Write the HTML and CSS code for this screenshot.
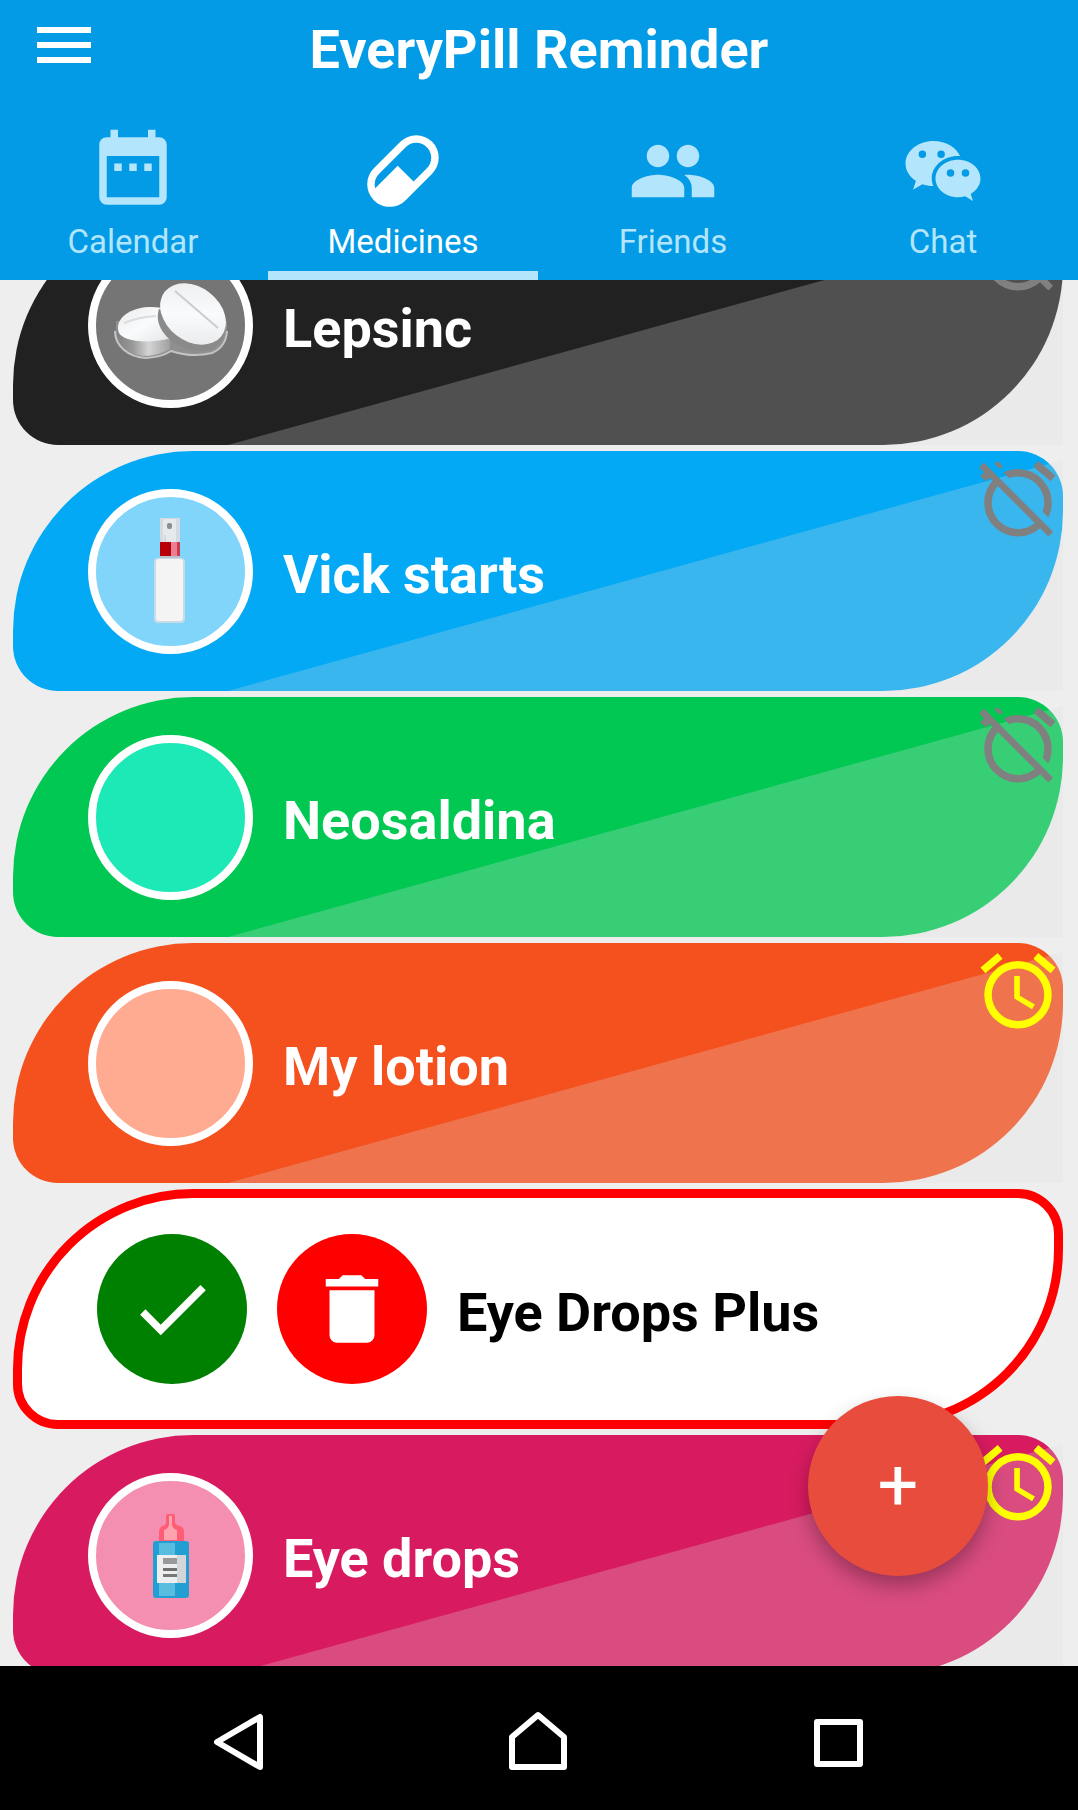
FILE: index.html
```html
<!DOCTYPE html>
<html lang="en">
<head>
<meta charset="utf-8">
<meta name="viewport" content="width=device-width, initial-scale=1">
<title>EveryPill Reminder</title>
<link rel="stylesheet" href="styles.css">
</head>
<body>
<svg class="sprite" aria-hidden="true">
  <symbol id="alarm" viewBox="0 0 24 24"><path d="M12,20A7,7 0 0,1 5,13A7,7 0 0,1 12,6A7,7 0 0,1 19,13A7,7 0 0,1 12,20M12,4A9,9 0 0,0 3,13A9,9 0 0,0 12,22A9,9 0 0,0 21,13A9,9 0 0,0 12,4M12.5,8H11V14L15.75,16.85L16.5,15.62L12.5,13.25V8M7.88,3.39L6.6,1.86L2,5.71L3.29,7.24L7.88,3.39M22,5.72L17.4,1.86L16.11,3.39L20.71,7.25L22,5.72Z"/></symbol>
  <symbol id="alarm-off" viewBox="0 0 24 24"><path d="M8,3.28L6.6,1.86L5.74,2.57L7.16,4M16.47,18.39C15.26,19.39 13.7,20 12,20A7,7 0 0,1 5,13C5,11.3 5.61,9.74 6.61,8.53M2.92,2.29L1.65,3.57L3,4.9L1.87,5.83L3.29,7.25L4.4,6.31L5.2,7.11C3.83,8.69 3,10.75 3,13A9,9 0 0,0 12,22C14.25,22 16.31,21.17 17.89,19.8L20.09,22L21.36,20.73L3.89,3.27M22,5.72L17.4,1.86L16.11,3.39L20.71,7.25M12,6A7,7 0 0,1 19,13C19,13.84 18.84,14.65 18.57,15.4L20.09,16.92C20.67,15.73 21,14.41 21,13A9,9 0 0,0 12,4C10.59,4 9.27,4.33 8.08,4.91L9.6,6.43C10.35,6.16 11.16,6 12,6Z"/></symbol>
</svg>

<header class="header">
  <div class="toolbar">
    <button class="menu" type="button" aria-label="Open menu">
      <svg class="menu-icon" viewBox="0 0 24 24"><path d="M3,6H21V8H3V6M3,11H21V13H3V11M3,16H21V18H3V16Z"/></svg>
    </button>
    <h1 class="title">EveryPill Reminder</h1>
  </div>
  <nav class="tabs">
    <a class="tab" href="#calendar">
      <svg class="icon" viewBox="0 0 24 24"><path d="M9,10H7V12H9V10M13,10H11V12H13V10M17,10H15V12H17V10M19,3H18V1H16V3H8V1H6V3H5C3.89,3 3,3.89 3,5V19A2,2 0 0,0 5,21H19A2,2 0 0,0 21,19V5A2,2 0 0,0 19,3M19,19H5V8H19V19Z"/></svg>
      <span>Calendar</span>
    </a>
    <a class="tab tab-active" href="#medicines" aria-current="page">
      <svg class="icon" viewBox="0 0 24 24"><path d="M4.22,11.29L11.29,4.22C13.64,1.88 17.43,1.88 19.78,4.22C22.12,6.56 22.12,10.36 19.78,12.71L12.71,19.78C10.36,22.12 6.56,22.12 4.22,19.78C1.88,17.43 1.88,13.64 4.22,11.29M5.64,12.71C4.59,13.75 4.24,15.24 4.6,16.57L10.59,10.59L14.83,14.83L18.36,11.29C19.93,9.73 19.93,7.2 18.36,5.64C16.8,4.07 14.27,4.07 12.71,5.64L5.64,12.71Z"/></svg>
      <span>Medicines</span>
    </a>
    <a class="tab" href="#friends">
      <svg class="icon" viewBox="0 0 24 24"><path d="M16 11c1.66 0 2.99-1.34 2.99-3S17.66 5 16 5c-1.66 0-3 1.34-3 3s1.34 3 3 3zm-8 0c1.66 0 2.99-1.34 2.99-3S9.66 5 8 5C6.34 5 5 6.34 5 8s1.34 3 3 3zm0 2c-2.33 0-7 1.17-7 3.5V19h14v-2.5c0-2.33-4.67-3.5-7-3.5zm8 0c-.29 0-.62.02-.97.05 1.16.84 1.97 1.97 1.97 3.45V19h6v-2.5c0-2.33-4.67-3.5-7-3.5z"/></svg>
      <span>Friends</span>
    </a>
    <a class="tab" href="#chat">
      <svg class="icon" viewBox="0 0 24 24"><path fill-rule="evenodd" d="M9.5,4C5.36,4 2,6.69 2,10C2,11.89 3.08,13.56 4.78,14.66L4,17L6.5,15.5C7.39,15.81 8.37,16 9.41,16C9.15,15.37 9,14.7 9,14C9,10.69 12.13,8 16,8C16.19,8 16.38,8 16.56,8.03C15.54,5.69 12.78,4 9.5,4M6.5,6.5A1,1 0 0,1 6.5,8.5A1,1 0 0,1 6.5,6.5M11.5,6.5A1,1 0 0,1 11.5,8.5A1,1 0 0,1 11.5,6.5M16,9C12.69,9 10,11.24 10,14C10,16.76 12.69,19 16,19C16.67,19 17.31,18.92 17.91,18.75L20,20L19.38,18.13C20.95,17.22 22,15.71 22,14C22,11.24 19.31,9 16,9M14,11.5A1,1 0 0,1 14,13.5A1,1 0 0,1 14,11.5M18,11.5A1,1 0 0,1 18,13.5A1,1 0 0,1 18,11.5Z"/></svg>
      <span>Chat</span>
    </a>
  </nav>
</header>

<main class="content">
  <ul class="medicines">
    <li class="medicine">
      <div class="card card-black">
        <div class="picture">
          <svg class="drawing" viewBox="0 0 149 149">
            <defs>
              <linearGradient id="pill-side" x1="0" x2="1" y1="0" y2="0"><stop offset="0" stop-color="#808080"/><stop offset=".3" stop-color="#999"/><stop offset=".6" stop-color="#d4d4d4"/><stop offset="1" stop-color="#a0a0a0"/></linearGradient>
              <linearGradient id="pill-face" x1="0" x2="1" y1="0" y2="1"><stop offset="0" stop-color="#e9eaeb"/><stop offset=".5" stop-color="#fafbfc"/><stop offset="1" stop-color="#e4e5e6"/></linearGradient>
            </defs>
            <path d="M20 74C17 92 30 106 50 107Q66 106 75 100Q96 107 116 102Q130 96 131 82V70H20Z" fill="#8f8f8f"/>
            <path d="M21 78C19 93 32 104 50 105Q64 104 74 98V80Z" fill="url(#pill-side)"/>
            <path d="M19 80C19 95 32 106 50 107Q66 106 75 100Q96 107 116 102Q130 96 131 80" fill="none" stroke="#c4c4c4" stroke-width="2"/>
            <path d="M22 75C24 62 43 53 66 57L75 87C56 93 22 92 22 78Z" fill="url(#pill-face)"/>
            <path d="M28 72Q42 66 60 65" fill="none" stroke="#dcdcdc" stroke-width="2"/>
            <path d="M63 58C57 74 72 96 101 100Q124 101 129 82L100 60Z" fill="#8a8a8a"/>
            <ellipse cx="97" cy="63" rx="36" ry="27" transform="rotate(38 97 63)" fill="url(#pill-face)"/>
            <path d="M79 40L122 77" stroke="#cbcdce" stroke-width="2"/>
          </svg>
        </div>
        <h2 class="name">Lepsinc</h2>
      </div>
      <svg class="alarm alarm-muted" role="img" aria-label="Alarm off"><use href="#alarm-off"/></svg>
    </li>
    <li class="medicine">
      <div class="card card-blue">
        <div class="picture">
          <svg class="drawing" viewBox="0 0 149 149">
            <rect x="64" y="21" width="20" height="25" fill="#d3dae0"/>
            <rect x="67" y="22" width="13" height="24" fill="#e6e9ec"/>
            <rect x="71" y="26" width="5" height="6" rx="2" fill="#8b8f94"/>
            <path d="M69 38V45" stroke="#c3c6ca" stroke-width="1"/>
            <rect x="64" y="45" width="20" height="15" fill="#b80008"/>
            <rect x="75" y="45" width="9" height="15" fill="#e87f92"/>
            <rect x="81" y="45" width="3" height="15" fill="#cf3a50"/>
            <rect x="64" y="59" width="20" height="3" fill="#b9c2c9"/>
            <rect x="58" y="61" width="31" height="65" rx="4" fill="#c9dbe5"/>
            <rect x="60" y="62" width="27" height="62" rx="3" fill="#f4f4f4"/>
          </svg>
        </div>
        <h2 class="name">Vick starts</h2>
      </div>
      <svg class="alarm alarm-muted" role="img" aria-label="Alarm off"><use href="#alarm-off"/></svg>
    </li>
    <li class="medicine">
      <div class="card card-green">
        <div class="picture"></div>
        <h2 class="name">Neosaldina</h2>
      </div>
      <svg class="alarm alarm-muted" role="img" aria-label="Alarm off"><use href="#alarm-off"/></svg>
    </li>
    <li class="medicine">
      <div class="card card-orange">
        <div class="picture"></div>
        <h2 class="name">My lotion</h2>
      </div>
      <svg class="alarm" role="img" aria-label="Alarm on"><use href="#alarm"/></svg>
    </li>
    <li class="medicine-editing">
      <div class="card card-editing">
        <button class="action action-confirm" type="button" aria-label="Confirm">
          <svg class="icon" viewBox="0 0 24 24"><path d="M21,7L9,19L3.5,13.5L4.91,12.09L9,16.17L19.59,5.59L21,7Z"/></svg>
        </button>
        <button class="action action-delete" type="button" aria-label="Delete">
          <svg class="icon" viewBox="0 0 24 24"><path d="M19,4H15.5L14.5,3H9.5L8.5,4H5V6H19V4M6,19A2,2 0 0,0 8,21H16A2,2 0 0,0 18,19V7H6V19Z"/></svg>
        </button>
        <h2 class="name">Eye Drops Plus</h2>
      </div>
    </li>
    <li class="medicine">
      <div class="card card-pink">
        <div class="picture">
          <svg class="drawing" viewBox="0 0 149 149">
            <path d="M70 35Q70 33 72 33H77Q79 33 79 35V42Q80 44 84 45Q88 47 88 50V60H63V50Q63 47 66 45Q70 44 70 42Z" fill="#ff5c75"/>
            <path d="M73 35H76V44Q77 48 81 49V59H68V49Q72 48 73 44Z" fill="#ffa3ae"/>
            <rect x="57" y="60" width="36" height="57" rx="3" fill="#229fd2"/>
            <rect x="63" y="62" width="16" height="53" fill="#59bde0"/>
            <rect x="61" y="74" width="29" height="28" fill="#eceeef"/>
            <rect x="81" y="74" width="9" height="28" fill="#d3d6d8"/>
            <rect x="67" y="77" width="14" height="6" fill="#999"/>
            <rect x="67" y="87" width="14" height="3" fill="#707070"/>
            <rect x="67" y="93" width="14" height="3" fill="#777"/>
          </svg>
        </div>
        <h2 class="name">Eye drops</h2>
      </div>
      <svg class="alarm" role="img" aria-label="Alarm on"><use href="#alarm"/></svg>
    </li>
  </ul>
  <button class="add" type="button" aria-label="Add medicine">+</button>
</main>

<footer class="system-bar">
  <div class="system-buttons">
    <button class="system-button" type="button" aria-label="Back">
      <svg class="system-icon" viewBox="0 0 60 60"><path d="M52 6V56L9 31Z"/></svg>
    </button>
    <button class="system-button" type="button" aria-label="Home">
      <svg class="system-icon" viewBox="0 0 60 60"><path d="M4 56V26L30 4L56 26V56Z"/></svg>
    </button>
    <button class="system-button" type="button" aria-label="Recent apps">
      <svg class="system-icon" viewBox="0 0 60 60"><path d="M9 11H52V53H9Z"/></svg>
    </button>
  </div>
</footer>
</body>
</html>
```
FILE: styles.css
```css
* {
  box-sizing: border-box;
}

body {
  display: flex;
  flex-direction: column;
  height: 100vh;
  margin: 0;
  background: #eee;
  font-family: Roboto, "Liberation Sans", sans-serif;
}

button {
  padding: 0;
  border: 0;
  background: none;
  color: inherit;
  font: inherit;
  cursor: pointer;
}

svg {
  display: block;
  fill: currentColor;
}

.sprite {
  position: absolute;
  width: 0;
  height: 0;
}

.icon {
  width: 90px;
  height: 90px;
}

/* App bar and tabs */

.header {
  background: #039be5;
  color: #fff;
}

.toolbar {
  display: grid;
  grid-template-columns: 72px 1fr 72px;
  align-items: center;
  height: 98px;
  padding: 0 28px;
}

.menu {
  align-self: start;
  padding-top: 9px;
}

.menu-icon {
  width: 72px;
  height: 72px;
}

.title {
  margin: 0;
  padding-top: 2px;
  font-size: 54px;
  font-weight: 700;
  line-height: 64px;
  text-align: center;
}

.tabs {
  display: grid;
  grid-template-columns: repeat(4, 1fr);
  margin-left: -2px;
}

.tab {
  display: flex;
  flex-direction: column;
  align-items: center;
  height: 182px;
  padding-top: 28px;
  border-bottom: 9px solid transparent;
  color: #b3e5fc;
  font-size: 33px;
  line-height: 40px;
  gap: 6px;
  text-decoration: none;
}

.tab-active {
  border-color: #b3e5fc;
  color: #fff;
}

/* Medicine list */

.content {
  position: relative;
  flex: 1;
  min-height: 0;
  overflow: hidden;
}

/* The list is shown part-way through its scroll. */
.medicines {
  display: flex;
  flex-direction: column;
  gap: 6px;
  margin: -75px 15px 0 13px;
  padding: 0;
  list-style: none;
}

.medicine {
  position: relative;
}

/* Diagonal sheen over the lower right of each card */
.medicine::after {
  content: "";
  position: absolute;
  inset: 0;
  background: rgba(224, 224, 224, 0.25);
  clip-path: polygon(215px 100%, 100% 9px, 100% 100%);
  pointer-events: none;
}

.medicine > .alarm,
.picture,
.card .name {
  z-index: 1;
}

.card {
  display: flex;
  align-items: center;
  gap: 30px;
  height: 240px;
  padding: 0 75px;
  border-radius: 180px 45px;
  color: #fff;
}

.card-black { background: #212121; }
.card-blue { background: #03a9f4; }
.card-green { background: #00c853; }
.card-orange { background: #f4511e; }
.card-pink { background: #d81b60; }

.card-editing {
  border: 9px solid #f00;
  background: #fff;
  color: #000;
}

.picture {
  width: 165px;
  height: 165px;
  border: 8px solid #fff;
  border-radius: 50%;
}

.card-black .picture { background: #757575; }
.card-blue .picture { background: #81d4fa; }
.card-green .picture { background: #1de9b6; }
.card-orange .picture { background: #ffab91; }
.card-pink .picture { background: #f48fb1; }

.drawing {
  width: 149px;
  height: 149px;
}

.name {
  margin: 0;
  padding-top: 8px;
  font-size: 54px;
  font-weight: 700;
  line-height: 64px;
}

.alarm {
  position: absolute;
  top: 3px;
  right: 0;
  width: 90px;
  height: 90px;
  color: #ff0;
}

.alarm-muted {
  color: #808080;
}

.action {
  display: grid;
  place-items: center;
  width: 150px;
  height: 150px;
  border-radius: 50%;
  color: #fff;
}

.action-confirm { background: #008000; }
.action-delete { background: #f00; }

.add {
  position: absolute;
  z-index: 2;
  right: 90px;
  bottom: 90px;
  width: 180px;
  height: 180px;
  padding-bottom: 2px;
  border-radius: 50%;
  background: #e74c3c;
  box-shadow: 0 10px 20px rgba(0, 0, 0, 0.3);
  color: #fff;
  font-size: 72px;
  line-height: 84px;
}

/* System navigation */

.system-bar {
  height: 144px;
  background: #000;
  color: #fff;
}

.system-buttons {
  display: grid;
  grid-template-columns: repeat(3, 300px);
  justify-content: center;
  height: 100%;
  margin-left: -2px;
}

.system-button {
  display: grid;
  place-items: center;
  padding-top: 6px;
}

.system-icon {
  width: 60px;
  height: 60px;
  fill: none;
  stroke: currentColor;
  stroke-width: 6;
  stroke-linejoin: round;
}
```
